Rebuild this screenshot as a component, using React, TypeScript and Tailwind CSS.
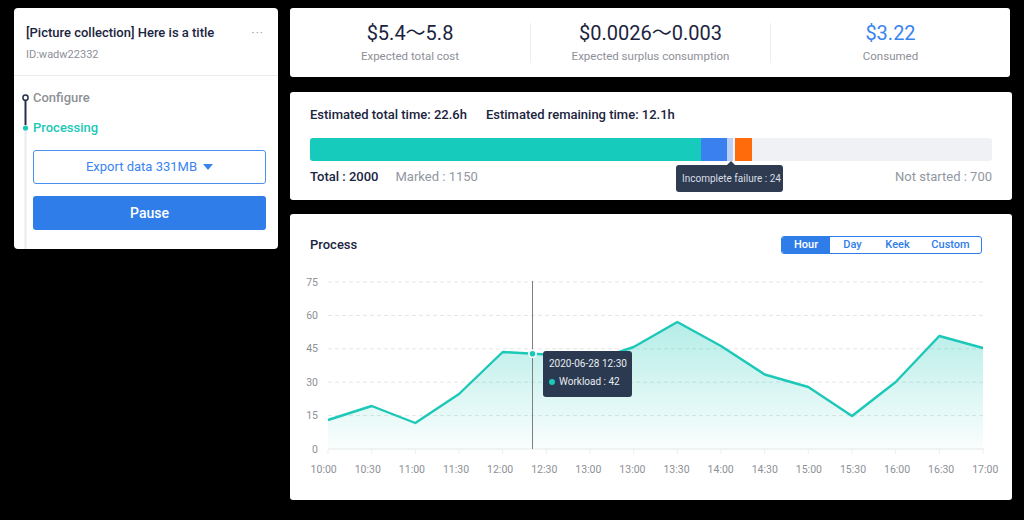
import React from "react";

const ys = [420, 406, 423, 394, 352, 354.5, 362, 347, 322, 346, 374.5, 387, 416, 382, 336, 348];
const xs = ys.map((_, i) => 328 + i * 43.667);
const xLabels = ["10:00", "10:30", "11:00", "11:30", "12:00", "12:30", "13:00", "13:00", "13:30", "14:00", "14:30", "15:00", "15:30", "16:00", "16:30", "17:00"];
const gridY = [282, 315.4, 348.8, 382.2, 415.6, 449];
const yLabels = ["75", "60", "45", "30", "15", "0"];

function Chart() {
  const line = xs.map((x, i) => `${x.toFixed(1)},${ys[i]}`).join(" ");
  const area = `${line} 983,449 328,449`;
  return (
    <div className="relative w-[700px] h-[210px] ml-[15px] mt-[16px]">
      <svg width="700" height="210" viewBox="305 270 700 210" className="block">
        <defs>
          <linearGradient id="fillG" x1="0" y1="322" x2="0" y2="449" gradientUnits="userSpaceOnUse">
            <stop offset="0" stopColor="#1cc8b7" stopOpacity="0.33" />
            <stop offset="1" stopColor="#1cc8b7" stopOpacity="0.02" />
          </linearGradient>
        </defs>
        {gridY.map((y, i) =>
          i === gridY.length - 1 ? (
            <line key={i} x1="328" x2="984" y1={y} y2={y} stroke="#e6e8ec" strokeWidth="1" />
          ) : (
            <line key={i} x1="328" x2="984" y1={y} y2={y} stroke="#e3e5e9" strokeWidth="1" strokeDasharray="4 3" />
          )
        )}
        {yLabels.map((t, i) => (
          <text key={t} x="318" y={gridY[i] + 3.6} textAnchor="end" fontSize="10.5" fill="#8d9097" fontFamily="Roboto, sans-serif">
            {t}
          </text>
        ))}
        {xs.map((x, i) => (
          <line key={"t" + i} x1={x} x2={x} y1="449" y2="454" stroke="#eceef1" strokeWidth="1" />
        ))}
        {xLabels.map((t, i) => (
          <text key={"x" + i} x={323.7 + i * 44.107} y="472.5" textAnchor="middle" fontSize="10.5" fill="#8d9097" fontFamily="Roboto, sans-serif">
            {t}
          </text>
        ))}
        <polygon points={area} fill="url(#fillG)" />
        <line x1="532.5" x2="532.5" y1="281" y2="449" stroke="#7d7f84" strokeWidth="1" />
        <polyline points={line} fill="none" stroke="#1cc8b7" strokeWidth="2.4" strokeLinejoin="round" />
        <circle cx="532.5" cy="353.7" r="3.6" fill="#1cc8b7" stroke="#ffffff" strokeWidth="1.6" />
      </svg>
      <div className="absolute left-[238px] top-[81px] w-[89px] h-[46px] rounded-[3px] bg-[#2b3a51] px-[6px] pt-[4px] text-[10px] leading-[18px] text-[#e8ebf0] whitespace-nowrap">
        <div>2020-06-28 12:30</div>
        <div className="flex items-center gap-[4px]">
          <span className="inline-block w-[6px] h-[6px] rounded-full bg-[#1cc8b7]" />
          <span>Workload : 42</span>
        </div>
      </div>
    </div>
  );
}

function Rail() {
  return (
    <svg width="19" height="173" viewBox="0 0 19 173" className="block shrink-0">
      <line x1="11.5" x2="11.5" y1="54" y2="173" stroke="#e8ebf0" strokeWidth="2" />
      <line x1="11.5" x2="11.5" y1="24" y2="49" stroke="#25304a" strokeWidth="2" />
      <circle cx="11.5" cy="21.7" r="2.6" fill="#ffffff" stroke="#25304a" strokeWidth="1.5" />
      <circle cx="11.5" cy="52" r="2.6" fill="#1cc8b7" />
    </svg>
  );
}

export default function App() {
  return (
    <div className="w-[1024px] h-[520px] bg-black flex items-start pl-[14px] pt-[8px] gap-[12px] font-['Roboto','Noto_Sans_CJK_SC',sans-serif] overflow-hidden">
      {/* Left card */}
      <div className="w-[264px] h-[241px] bg-white rounded-[4px] flex flex-col overflow-hidden">
        <div className="pl-[12px] pr-[14px] pt-[16px] pb-[12px] border-b border-[#e9ebef]">
          <div className="flex items-center justify-between">
            <span className="text-[13px] leading-[18px] font-medium text-[#1b2440]">[Picture collection] Here is a title</span>
            <span className="text-[12px] leading-[18px] text-[#9a9ea6] tracking-[1px]">···</span>
          </div>
          <div className="mt-[5px] text-[11px] leading-[16px] text-[#8d9097]">ID:wadw22332</div>
        </div>
        <div className="flex flex-1">
          <Rail />
          <div className="flex-1 pr-[12px] pt-[13px]">
            <div className="text-[13px] leading-[18px] font-medium text-[#8e9096]">Configure</div>
            <div className="mt-[12px] text-[13px] leading-[18px] font-medium text-[#1cc8b7]">Processing</div>
            <div className="mt-[13px] h-[34px] rounded-[3px] border-[1.5px] border-[#4b8ef0] flex items-center justify-center gap-[6px] text-[13px] text-[#3a84ef]">
              <span>Export data 331MB</span>
              <svg width="10" height="6" viewBox="0 0 10 6">
                <path d="M0 0 L10 0 L5 6 Z" fill="#3a84ef" />
              </svg>
            </div>
            <div className="mt-[12px] h-[34px] rounded-[3px] bg-[#2f7de9] flex items-center justify-center text-[14px] font-medium text-white">
              Pause
            </div>
          </div>
        </div>
      </div>

      {/* Right column */}
      <div className="flex flex-col gap-[15px]">
        {/* Stats */}
        <div className="w-[720px] h-[69px] bg-white rounded-[3px] flex items-center">
          <div className="w-[240px] flex flex-col items-center">
            <div className="text-[20px] leading-[24px] text-[#1b2440]">$5.4～5.8</div>
            <div className="mt-[3px] text-[11.5px] leading-[16px] text-[#8d9097]">Expected total cost</div>
          </div>
          <div className="w-px h-[40px] bg-[#eceef2]" />
          <div className="w-[239px] flex flex-col items-center">
            <div className="text-[20px] leading-[24px] text-[#1b2440]">$0.0026～0.003</div>
            <div className="mt-[3px] text-[11.5px] leading-[16px] text-[#8d9097]">Expected surplus consumption</div>
          </div>
          <div className="w-px h-[40px] bg-[#eceef2]" />
          <div className="w-[239px] flex flex-col items-center">
            <div className="text-[20px] leading-[24px] text-[#3a84ef]">$3.22</div>
            <div className="mt-[3px] text-[11.5px] leading-[16px] text-[#8d9097]">Consumed</div>
          </div>
        </div>

        {/* Progress */}
        <div className="relative w-[722px] bg-white rounded-[3px] px-[20px] pt-[14px] pb-[14px]">
          <div className="flex gap-[19px] text-[13px] leading-[18px] font-medium text-[#1b2440]">
            <span>Estimated total time: 22.6h</span>
            <span>Estimated remaining time: 12.1h</span>
          </div>
          <div className="mt-[14px] h-[23px] flex rounded-[3px] overflow-hidden bg-[#eff1f4]">
            <div className="w-[391px] bg-[#16cbbb]" />
            <div className="w-[26px] bg-[#3a80ef]" />
            <div className="w-[6px] bg-[#bcd0f5]" />
            <div className="w-[2px] bg-[#f4f6f9]" />
            <div className="w-[17px] bg-[#ff6a0a]" />
          </div>
          <div className="mt-[7px] flex items-center text-[13px] leading-[18px]">
            <span className="font-medium text-[#1b2440]">Total : 2000</span>
            <span className="ml-[17px] text-[#9197a1]">Marked : 1150</span>
            <span className="ml-auto text-[#9197a1]">Not started : 700</span>
          </div>
          <div className="absolute left-[386px] top-[73px] w-[107px] h-[27px] rounded-[3px] bg-[#2e3b50] flex items-center pl-[6px] text-[10px] text-[#d9dee6] whitespace-nowrap">
            <div className="absolute -top-[4px] left-[51px] w-0 h-0 border-l-[4px] border-r-[4px] border-b-[4px] border-l-transparent border-r-transparent border-b-[#2e3b50]" />
            Incomplete failure : 24
          </div>
        </div>

        {/* Process chart */}
        <div className="w-[722px] h-[286px] bg-white rounded-[3px] pt-[22px] -mt-[1px]">
          <div className="h-[18px] pl-[20px] pr-[30px] flex items-center justify-between">
            <span className="text-[13px] font-medium text-[#1b2440]">Process</span>
            <div className="flex h-[18px] w-[201px] rounded-[3px] border-[1.5px] border-[#2f7de9] overflow-hidden text-[11px] font-medium text-[#2f7de9]">
              <div className="w-[48px] bg-[#2f7de9] text-white flex items-center justify-center">Hour</div>
              <div className="w-[45px] flex items-center justify-center">Day</div>
              <div className="w-[45px] flex items-center justify-center">Keek</div>
              <div className="flex-1 flex items-center justify-center">Custom</div>
            </div>
          </div>
          <Chart />
        </div>
      </div>
    </div>
  );
}
